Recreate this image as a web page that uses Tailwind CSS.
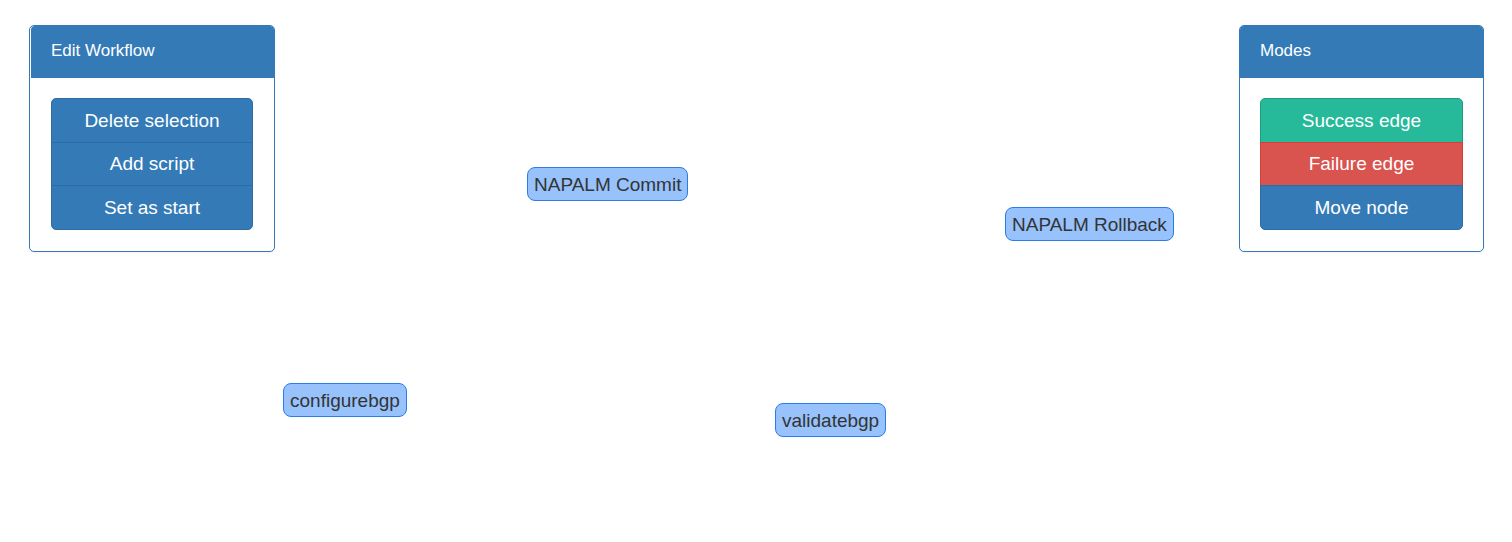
<!DOCTYPE html>
<html lang="en">
<head>
<meta charset="utf-8">
<title>Workflow Builder</title>
<script src="https://cdn.jsdelivr.net/npm/@tailwindcss/browser@4"></script>
</head>
<body class="bg-white font-['Liberation_Sans',Arial,sans-serif] text-white">
<div class="relative min-h-screen">
  <main class="absolute inset-0 text-[19px] leading-[30px] text-[#343434]" aria-label="Workflow graph">
    <div class="absolute left-[527px] top-[167px] rounded-lg border border-[#2b7ce9] bg-[#97c2fc] px-1.5 pt-0.5 whitespace-nowrap">NAPALM Commit</div>
    <div class="absolute left-[1005px] top-[207px] rounded-lg border border-[#2b7ce9] bg-[#97c2fc] px-1.5 pt-0.5 whitespace-nowrap">NAPALM Rollback</div>
    <div class="absolute left-[283px] top-[383px] rounded-lg border border-[#2b7ce9] bg-[#97c2fc] px-1.5 pt-0.5 whitespace-nowrap">configurebgp</div>
    <div class="absolute left-[775px] top-[403px] rounded-lg border border-[#2b7ce9] bg-[#97c2fc] px-1.5 pt-0.5 whitespace-nowrap">validatebgp</div>
  </main>
  <div class="relative flex items-start justify-between pt-[25px] pr-7 pl-[29px]">
    <section class="w-[246px] rounded-[5px] border border-[#337ab7] bg-white shadow-xs">
      <h2 class="ml-px rounded-t-[4px] bg-[#337ab7] px-5 pt-3 pb-3.5 text-[17px] leading-[26px]">Edit Workflow</h2>
      <div class="flex flex-col px-[21px] pt-5 pb-[21px] text-[19px] leading-[42px]">
        <button class="h-[45px] rounded-t-[5px] border border-[#2e6da4] bg-[#337ab7]">Delete selection</button>
        <button class="-mt-px h-11 border border-[#2e6da4] bg-[#337ab7]">Add script</button>
        <button class="-mt-px h-[45px] rounded-b-[5px] border border-[#2e6da4] bg-[#337ab7]">Set as start</button>
      </div>
    </section>
    <section class="w-[245px] rounded-[5px] border border-[#337ab7] bg-white shadow-xs">
      <h2 class="rounded-t-[4px] bg-[#337ab7] px-5 pt-3 pb-3.5 text-[17px] leading-[26px]">Modes</h2>
      <div class="flex flex-col px-5 pt-5 pb-[21px] text-[19px] leading-[42px]">
        <button class="h-[45px] rounded-t-[5px] border border-[#1e9e80] bg-[#26b99a]">Success edge</button>
        <button class="-mt-px h-11 border border-[#d43f3a] bg-[#d9534f]">Failure edge</button>
        <button class="-mt-px h-[45px] rounded-b-[5px] border border-[#2e6da4] bg-[#337ab7]">Move node</button>
      </div>
    </section>
  </div>
</div>
</body>
</html>
